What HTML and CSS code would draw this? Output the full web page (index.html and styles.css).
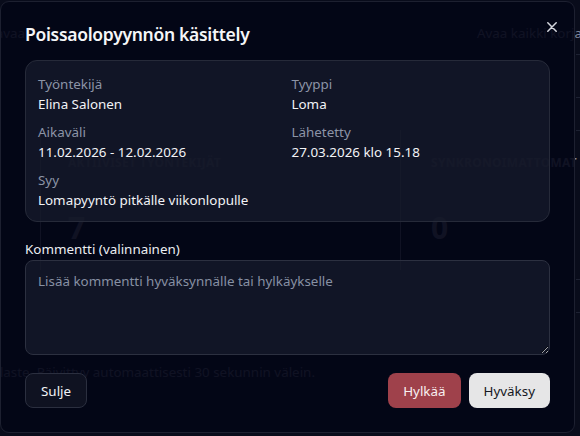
FILE: index.html
```html
<!DOCTYPE html>
<html lang="fi">
<head>
<meta charset="utf-8">
<title>Poissaolopyynnön käsittely</title>
<link rel="stylesheet" href="styles.css">
</head>
<body>
<div class="page" aria-hidden="true">
  <div class="page-head">
    <span class="page-title">Tarkastele ja avaa</span>
    <span class="page-link">Avaa kaikki korjauspyynnöt</span>
  </div>
  <div class="main">
    <div class="stats">
      <div class="stat">
        <div class="stat-label">Aktiiviset työntekijät</div>
        <div class="stat-value">7</div>
      </div>
      <div class="stat">
        <div class="stat-label">Synkronoimattomat leimaukset</div>
        <div class="stat-value">0</div>
      </div>
    </div>
    <p class="page-note">Reaaliaikainen tilaste. Päivittyy automaattisesti 30 sekunnin välein.</p>
  </div>
  <div class="side">
    <div class="row r1"></div>
    <div class="row r2"></div>
    <div class="row r3"></div>
    <div class="row r4"></div>
    <div class="row r5"></div>
  </div>
</div>

<div class="modal" role="dialog" aria-labelledby="modal-title">
  <div class="modal-head">
    <h2 id="modal-title" class="modal-title">Poissaolopyynnön käsittely</h2>
    <button class="close-btn" aria-label="Sulje">
      <svg width="10" height="10" viewBox="0 0 10 10" aria-hidden="true">
        <path d="M0.8 0.8 L9.2 9.2 M9.2 0.8 L0.8 9.2" stroke="#d4d6dd" stroke-width="1.5" stroke-linecap="round" fill="none"/>
      </svg>
    </button>
  </div>

  <div class="info-card">
    <div class="info-item">
      <div class="info-label">Työntekijä</div>
      <div class="info-value">Elina Salonen</div>
    </div>
    <div class="info-item">
      <div class="info-label">Tyyppi</div>
      <div class="info-value">Loma</div>
    </div>
    <div class="info-item">
      <div class="info-label">Aikaväli</div>
      <div class="info-value">11.02.2026 - 12.02.2026</div>
    </div>
    <div class="info-item">
      <div class="info-label">Lähetetty</div>
      <div class="info-value">27.03.2026 klo 15.18</div>
    </div>
    <div class="info-item">
      <div class="info-label">Syy</div>
      <div class="info-value">Lomapyyntö pitkälle viikonlopulle</div>
    </div>
  </div>

  <label class="field-label" for="comment">Kommentti (valinnainen)</label>
  <textarea id="comment" class="comment" placeholder="Lisää kommentti hyväksynnälle tai hylkäykselle"></textarea>

  <div class="actions">
    <button class="btn btn-ghost">Sulje</button>
    <div class="actions-right">
      <button class="btn btn-reject">Hylkää</button>
      <button class="btn btn-approve">Hyväksy</button>
    </div>
  </div>
</div>
</body>
</html>
```

FILE: styles.css
```css
html, body {
  margin: 0;
  padding: 0;
}

body {
  width: 580px;
  height: 436px;
  overflow: hidden;
  background: #090c1b;
  font-family: "Segoe UI", "Noto Sans", "Open Sans", sans-serif;
  color: #e8eaf0;
  position: relative;
}

/* ---------- background page (mostly hidden under the dialog) ---------- */
.page {
  margin-left: -120px;
  width: 900px;
  display: grid;
  grid-template-columns: 696px 1fr;
  color: #80869a;
  font-size: 13.4px;
  line-height: 20px;
}

.page-head {
  grid-column: 1 / -1;
  display: grid;
  grid-template-columns: 145px auto;
  column-gap: 452px;
  padding-top: 23px;
  height: 20px;
  white-space: nowrap;
}

.page-title {
  text-align: right;
}

.main {
  padding-left: 160px;
}

.stats {
  margin-top: 87px;
  display: grid;
  grid-template-columns: 345px 350px;
  column-gap: 15px;
}

.stat {
  border-left: 1px solid #80869a;
  padding: 24px 0 24px 27px;
  white-space: nowrap;
}

.stat + .stat {
  padding-left: 30px;
}

.stat-label {
  text-transform: uppercase;
  font-weight: 700;
  font-size: 12px;
  line-height: 18px;
  letter-spacing: 0.3px;
}

.stat-value {
  font-size: 30px;
  font-weight: 700;
  line-height: 36px;
  margin-top: 38px;
}

.page-note {
  margin: 92px 0 0 -160px;
  width: 435px;
  text-align: right;
  white-space: nowrap;
}

.side {
  display: flex;
  flex-direction: column;
}

.row {
  border-bottom: 1px solid #1d2132;
  box-sizing: border-box;
}

.r1 { height: 12px; }
.r2 { height: 43px; }
.r3 { height: 33px; }
.r4 { height: 149px; }
.r5 { height: 33px; }

/* ---------- dialog ---------- */
.modal {
  position: absolute;
  left: 0;
  top: 1px;
  width: 575px;
  height: 432px;
  box-sizing: border-box;
  padding: 24px;
  background: rgba(3, 6, 22, 0.9);
  border: 1px solid #1d2030;
  border-radius: 9px;
  display: flex;
  flex-direction: column;
}

.modal-head {
  display: flex;
  justify-content: space-between;
  align-items: flex-start;
  height: 24px;
  flex: none;
}

.modal-title {
  margin: -2px 0 0 0;
  font-size: 17.5px;
  letter-spacing: -0.3px;
  line-height: 20px;
  font-weight: 600;
  color: #f5f6f8;
}

.close-btn {
  background: none;
  border: 0;
  padding: 0;
  margin: -4px -7px 0 0;
  width: 10px;
  height: 10px;
  display: flex;
  cursor: pointer;
}

.info-card {
  margin-top: 10px;
  border: 1px solid #262a39;
  border-radius: 12px;
  background: rgba(24, 28, 44, 0.72);
  padding: 13px 12px 11px 12px;
  display: grid;
  grid-template-columns: 1fr 1fr;
  column-gap: 8px;
  row-gap: 8px;
}

.info-label {
  font-size: 13.4px;
  line-height: 20px;
  color: #8c94a6;
}

.info-value {
  font-size: 13.4px;
  line-height: 20px;
  color: #f2f3f6;
}

.field-label {
  margin-top: 17px;
  font-size: 13.4px;
  line-height: 20px;
  color: #eceef2;
}

.comment {
  margin-top: 1px;
  height: 95px;
  flex: none;
  box-sizing: border-box;
  resize: vertical;
  background: rgba(24, 28, 44, 0.72);
  border: 1px solid #2c3040;
  border-radius: 8px;
  padding: 10px 12px;
  font-family: inherit;
  font-size: 13.4px;
  line-height: 20px;
  color: #e8eaf0;
  outline: none;
}

.comment::placeholder {
  color: #8790a3;
}

.actions {
  margin-top: auto;
  display: flex;
  justify-content: space-between;
  align-items: center;
}

.actions-right {
  display: flex;
  gap: 8px;
}

.btn {
  height: 35px;
  padding: 0 14px;
  border-radius: 8px;
  font-family: inherit;
  font-size: 13.4px;
  border: 1px solid transparent;
  cursor: pointer;
}

.btn-ghost {
  background: #0f1221;
  border-color: #2b2f3f;
  color: #f1f2f5;
  padding: 0 15px;
}

.btn-reject {
  background: #9f414b;
  color: #f8f0f1;
}

.btn-approve {
  background: #e6e6e7;
  color: #141722;
}
```
